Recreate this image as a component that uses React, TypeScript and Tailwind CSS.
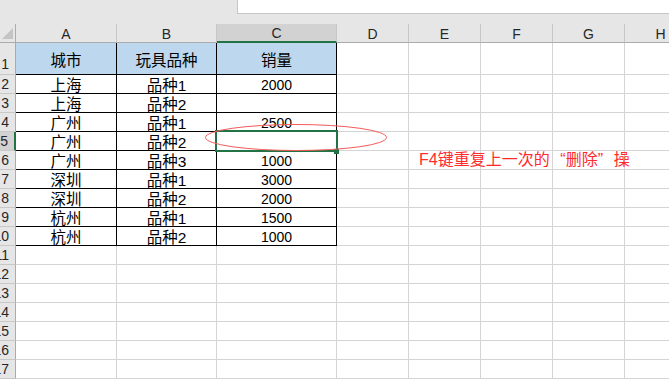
import React from "react";

const FONT = '"Liberation Sans", "Noto Sans CJK SC", sans-serif';

const columns = [
  { key: "A", width: "w-[101px]" },
  { key: "B", width: "w-[100px]" },
  { key: "C", width: "w-[120px]" },
  { key: "D", width: "w-[72px]" },
  { key: "E", width: "w-[72px]" },
  { key: "F", width: "w-[72px]" },
  { key: "G", width: "w-[72px]" },
  { key: "H", width: "w-[72px]" },
];

const tableRows: string[][] = [
  ["城市", "玩具品种", "销量"],
  ["上海", "品种1", "2000"],
  ["上海", "品种2", ""],
  ["广州", "品种1", "2500"],
  ["广州", "品种2", ""],
  ["广州", "品种3", "1000"],
  ["深圳", "品种1", "3000"],
  ["深圳", "品种2", "2000"],
  ["杭州", "品种1", "1500"],
  ["杭州", "品种2", "1000"],
];

const TOTAL_ROWS = 17;
const SELECTED_ROW = 5;
const NOTE_ROW = 6;

function RowHeader({ n, tall }: { n: number; tall: boolean }) {
  const selected = n === SELECTED_ROW;
  return (
    <div
      className={`flex shrink-0 items-center justify-end overflow-hidden whitespace-nowrap border-b border-[#c8c8c8] pr-[6px] text-[14px] text-[#262626] ${
        tall ? "pt-[12px]" : "pt-[1px]"
      } ${
        selected
          ? "w-[16px] border-r-2 border-r-[#217346] bg-[#d2d2d2]"
          : "w-[16px] border-r border-r-[#ababab] bg-[#e6e6e6]"
      }`}
    >
      {n}
    </div>
  );
}

function Note() {
  // full-width CJK quotes, as the sheet's font draws them
  return (
    <span className="absolute left-[10px] top-[0px] z-10 whitespace-nowrap text-[16px] leading-[17px] text-[#ff2b2b]">
      F4键重复上一次的
      <span className="inline-block w-[16px] text-right">“</span>
      删除
      <span className="inline-block w-[16px] text-left">”</span>操
    </span>
  );
}

function Cell({
  row,
  col,
  width,
}: {
  row: number;
  col: number;
  width: string;
}) {
  const inTable = row <= tableRows.length && col < 3;
  const isHeader = row === 1 && col < 3;
  const text = inTable ? tableRows[row - 1][col] : "";
  const isNote = row === NOTE_ROW && col === 4;
  const numeric = /^\d+$/.test(text);

  return (
    <div
      className={`relative flex shrink-0 items-center justify-center border-r border-b ${width} ${
        inTable ? "border-black" : "border-[#d4d4d4]"
      } ${isHeader ? "bg-[#bdd7ee] pt-[4px]" : "bg-white pt-[2px]"} ${
        numeric ? "text-[14px]" : "text-[15.5px]"
      } leading-[17px] text-black`}
    >
      {text}
      {/* text overflows into the empty cells to its right */}
      {isNote && <Note />}
    </div>
  );
}

export default function App() {
  const rows = Array.from({ length: TOTAL_ROWS }, (_, i) => i + 1);

  return (
    <div
      className="relative h-[379px] w-[669px] overflow-hidden bg-white"
      style={{ fontFamily: FONT }}
    >
      {/* name box / formula bar strip */}
      <div className="flex h-[24px] bg-[#e6e6e6]">
        <div className="ml-[237px] h-[14px] flex-1 border-b border-l border-[#c6c6c6] bg-white" />
      </div>

      {/* column headers */}
      <div className="flex h-[19px]">
        <div className="relative w-[16px] shrink-0 border-r border-b border-[#ababab] bg-[#e6e6e6]">
          <svg
            className="absolute left-[2px] top-[4px]"
            width="11"
            height="11"
            viewBox="0 0 11 11"
          >
            <polygon points="11,0 11,11 0,11" fill="#c4c4c4" />
          </svg>
        </div>
        {columns.map((c) => (
          <div
            key={c.key}
            className={`flex shrink-0 items-center justify-center border-r border-r-[#c6c6c6] pt-[1px] text-[14px] leading-none text-[#262626] ${c.width} ${
              c.key === "C"
                ? "border-b-2 border-b-[#217346] bg-[#d2d2d2]"
                : "border-b border-b-[#ababab] bg-[#e6e6e6]"
            }`}
          >
            {c.key}
          </div>
        ))}
      </div>

      {/* grid body */}
      {rows.map((r) => (
        <div key={r} className={`flex ${r === 1 ? "h-[32px]" : "h-[19px]"}`}>
          <RowHeader n={r} tall={r === 1} />
          {columns.map((c, ci) => (
            <Cell key={c.key} row={r} col={ci} width={c.width} />
          ))}
        </div>
      ))}

      {/* active cell C5 */}
      <div className="pointer-events-none absolute left-[215px] top-[130px] h-[22px] w-[123px] border-2 border-[#217346]" />
      <div className="pointer-events-none absolute left-[334px] top-[149px] h-[5px] w-[5px] bg-[#217346]" />

      {/* red annotation ellipse */}
      <svg
        className="pointer-events-none absolute left-0 top-0"
        width="669"
        height="379"
      >
        <ellipse
          cx="296"
          cy="137.5"
          rx="90.5"
          ry="13"
          fill="none"
          stroke="#f35a5a"
          strokeWidth="1"
        />
      </svg>
    </div>
  );
}
